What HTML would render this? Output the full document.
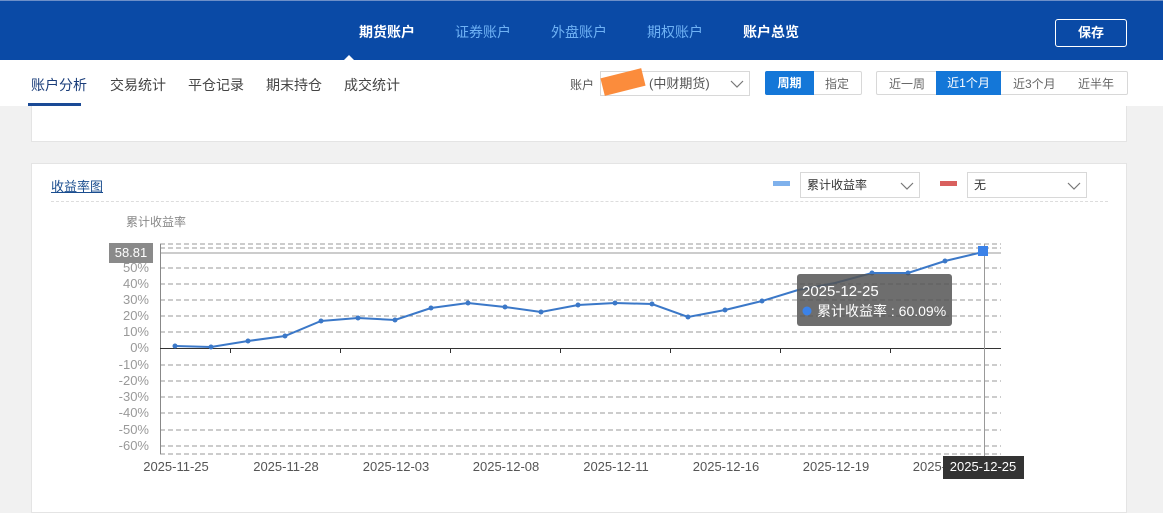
<!DOCTYPE html>
<html><head><meta charset="utf-8"><style>
*{margin:0;padding:0;box-sizing:border-box}
body{width:1163px;height:502px;overflow:hidden;background:#f1f1f1;font-family:"Liberation Sans","Noto Sans CJK SC",sans-serif;position:relative}
.hdr{position:absolute;left:0;top:0;width:1163px;height:60px;background:#0a4aa6;border-top:1px solid #6d8fc8}
.hdr span{position:absolute;top:21px;font-size:14px;color:#6fb2f5}
.hdr .w{color:#fff;font-weight:bold}
.save{position:absolute;left:1055px;top:18px;width:72px;height:28px;border:1px solid #fff;border-radius:3px;color:#fff;font-size:13px;font-weight:bold;text-align:center;line-height:26px}
.sub{position:absolute;left:0;top:60px;width:1163px;height:46px;background:#fff}
.sub .t{position:absolute;top:15px;font-size:14px;color:#444}
.abs{position:absolute}
.card{position:absolute;background:#fff;border:1px solid #e4e4e4}
.seg{position:absolute;border:1px solid #d8d8d8;border-radius:2px;font-size:12px;color:#666;text-align:center;line-height:22px;height:24px}
</style></head><body>
<div class="hdr">
<div style="position:absolute;left:343px;top:54px;width:0;height:0;border-left:6px solid transparent;border-right:6px solid transparent;border-bottom:6px solid #fff"></div>
<span class="w" style="left:359px">期货账户</span>
<span style="left:455px">证券账户</span>
<span style="left:551px">外盘账户</span>
<span style="left:647px">期权账户</span>
<span class="w" style="left:743px">账户总览</span>
<div class="save">保存</div>
</div>
<div class="sub">
<span class="t" style="left:31px;color:#1a3d7a">账户分析</span>
<div class="abs" style="left:28px;top:43px;width:53px;height:3px;background:#1a4a96"></div>
<span class="t" style="left:110px">交易统计</span>
<span class="t" style="left:188px">平仓记录</span>
<span class="t" style="left:266px">期末持仓</span>
<span class="t" style="left:344px">成交统计</span>
<span class="abs" style="left:570px;top:16px;font-size:12px;color:#555">账户</span>
<div class="abs" style="left:600px;top:11px;width:150px;height:25px;border:1px solid #d8d8d8;font-size:13px;color:#555;line-height:23px;padding-left:48px">(中财期货)</div>
<div class="abs" style="left:602px;top:13px;width:42px;height:18px;background:#fb8c3c;transform:rotate(-14deg)"></div>
<svg class="abs" style="left:730px;top:19px" width="14" height="10"><path d="M1 2 L7 8 L13 2" fill="none" stroke="#777" stroke-width="1.2"/></svg>
<div class="seg" style="left:765px;top:11px;width:97px;"></div>
<div class="abs" style="left:765px;top:11px;width:49px;height:24px;background:#1477d8;color:#fff;font-size:12px;font-weight:bold;text-align:center;line-height:24px;border-radius:2px 0 0 2px">周期</div>
<span class="abs" style="left:825px;top:15px;font-size:12px;color:#666">指定</span>
<div class="seg" style="left:876px;top:11px;width:252px"></div>
<span class="abs" style="left:889px;top:15px;font-size:12px;color:#666">近一周</span>
<div class="abs" style="left:936px;top:11px;width:65px;height:24px;background:#1477d8;color:#fff;font-size:12px;text-align:center;line-height:24px">近1个月</div>
<span class="abs" style="left:1013px;top:15px;font-size:12px;color:#666">近3个月</span>
<span class="abs" style="left:1078px;top:15px;font-size:12px;color:#666">近半年</span>
</div>
<div class="card" style="left:31px;top:106px;width:1096px;height:36px;border-top:none"></div>
<div class="card" style="left:31px;top:163px;width:1096px;height:350px"></div>
<span class="abs" style="left:51px;top:176px;font-size:13px;color:#1a4d8f;text-decoration:underline">收益率图</span>
<div class="abs" style="left:51px;top:201px;width:1057px;border-top:1px dashed #ddd"></div>
<div class="abs" style="left:773px;top:181px;width:17px;height:5px;background:#7fb1ec"></div>
<div class="abs" style="left:800px;top:172px;width:120px;height:26px;border:1px solid #d8d8d8;font-size:12px;color:#333;line-height:24px;padding-left:6px">累计收益率</div>
<svg class="abs" style="left:900px;top:181px" width="14" height="10"><path d="M1 2 L7 8 L13 2" fill="none" stroke="#777" stroke-width="1.2"/></svg>
<div class="abs" style="left:940px;top:181px;width:17px;height:5px;background:#d9605e"></div>
<div class="abs" style="left:967px;top:172px;width:120px;height:26px;border:1px solid #d8d8d8;font-size:12px;color:#333;line-height:24px;padding-left:6px">无</div>
<svg class="abs" style="left:1067px;top:181px" width="14" height="10"><path d="M1 2 L7 8 L13 2" fill="none" stroke="#777" stroke-width="1.2"/></svg>
<svg class="abs" style="left:0;top:0" width="1163" height="502" font-family="Liberation Sans, sans-serif">
<text x="126" y="226" font-size="12" fill="#888" font-family="Liberation Sans, Noto Sans CJK SC, sans-serif">累计收益率</text>
<g stroke="#999" stroke-dasharray="5,3" stroke-width="1">
<line x1="160" y1="244" x2="1001" y2="244"/><line x1="160" y1="248" x2="1001" y2="248"/>
<line x1="160" y1="268" x2="1001" y2="268"/><line x1="160" y1="284" x2="1001" y2="284"/>
<line x1="160" y1="300" x2="1001" y2="300"/><line x1="160" y1="316" x2="1001" y2="316"/>
<line x1="160" y1="332" x2="1001" y2="332"/><line x1="160" y1="365" x2="1001" y2="365"/>
<line x1="160" y1="381" x2="1001" y2="381"/><line x1="160" y1="397" x2="1001" y2="397"/>
<line x1="160" y1="413" x2="1001" y2="413"/><line x1="160" y1="430" x2="1001" y2="430"/>
<line x1="160" y1="446" x2="1001" y2="446"/><line x1="160" y1="454" x2="1001" y2="454"/>
</g>
<line x1="160" y1="253" x2="1001" y2="253" stroke="#999"/>
<line x1="160.5" y1="244" x2="160.5" y2="454" stroke="#888"/>
<line x1="160" y1="348.5" x2="1001" y2="348.5" stroke="#333"/>
<g stroke="#333"><line x1="230.5" y1="348" x2="230.5" y2="353"/><line x1="340.5" y1="348" x2="340.5" y2="353"/><line x1="450.5" y1="348" x2="450.5" y2="353"/><line x1="560.5" y1="348" x2="560.5" y2="353"/><line x1="670.5" y1="348" x2="670.5" y2="353"/><line x1="780.5" y1="348" x2="780.5" y2="353"/><line x1="890.5" y1="348" x2="890.5" y2="353"/></g>
<line x1="984.5" y1="244" x2="984.5" y2="458" stroke="#999"/>
<g font-size="13" fill="#999" text-anchor="end">
<text x="149" y="272">50%</text><text x="149" y="288">40%</text><text x="149" y="304">30%</text><text x="149" y="320">20%</text><text x="149" y="336">10%</text><text x="149" y="352">0%</text><text x="149" y="369">-10%</text><text x="149" y="385">-20%</text><text x="149" y="401">-30%</text><text x="149" y="417">-40%</text><text x="149" y="434">-50%</text><text x="149" y="450">-60%</text>
</g>
<rect x="109" y="243" width="44" height="20" fill="#8a8a8a"/>
<text x="131" y="257" font-size="13" fill="#fff" text-anchor="middle">58.81</text>
<polyline fill="none" stroke="#3b78c8" stroke-width="2" points="175,346 211,347 248,341 285,336 321,321 358,318 395,320 431,308 468,303 505,307 541,312 578,305 615,303 652,304 688,317 725,310 762,301 798,290 835,283 872,273 908,273 945,261 983,252"/>
<g fill="#3b78c8">
<circle cx="175" cy="346" r="2.5"/><circle cx="211" cy="347" r="2.5"/><circle cx="248" cy="341" r="2.5"/><circle cx="285" cy="336" r="2.5"/><circle cx="321" cy="321" r="2.5"/><circle cx="358" cy="318" r="2.5"/><circle cx="395" cy="320" r="2.5"/><circle cx="431" cy="308" r="2.5"/><circle cx="468" cy="303" r="2.5"/><circle cx="505" cy="307" r="2.5"/><circle cx="541" cy="312" r="2.5"/><circle cx="578" cy="305" r="2.5"/><circle cx="615" cy="303" r="2.5"/><circle cx="652" cy="304" r="2.5"/><circle cx="688" cy="317" r="2.5"/><circle cx="725" cy="310" r="2.5"/><circle cx="762" cy="301" r="2.5"/><circle cx="872" cy="273" r="2.5"/><circle cx="908" cy="273" r="2.5"/><circle cx="945" cy="261" r="2.5"/>
<rect x="978" y="246" width="10" height="10" fill="#3b82e8"/>
</g>
<rect x="797" y="274" width="155" height="52" rx="3" fill="#555" fill-opacity="0.85"/>
<text x="802" y="296" font-size="15" fill="#fff">2025-12-25</text>
<circle cx="807" cy="311" r="4.5" fill="#3b82e8"/>
<text x="817" y="316" font-size="14" fill="#fff" font-family="Liberation Sans, Noto Sans CJK SC, sans-serif">累计收益率 : 60.09%</text>
<g font-size="13" fill="#555" text-anchor="middle">
<text x="176" y="471">2025-11-25</text><text x="286" y="471">2025-11-28</text><text x="396" y="471">2025-12-03</text><text x="506" y="471">2025-12-08</text><text x="616" y="471">2025-12-11</text><text x="726" y="471">2025-12-16</text><text x="836" y="471">2025-12-19</text><text x="946" y="471">2025-12-22</text>
</g>
<rect x="943" y="456" width="81" height="23" fill="#333"/>
<text x="983" y="471" font-size="13" fill="#fff" text-anchor="middle">2025-12-25</text>
</svg>
</body></html>
